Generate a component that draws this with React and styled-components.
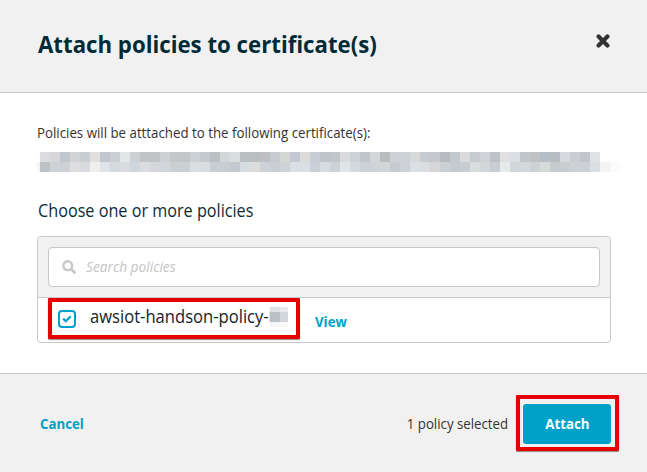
import React from "react";
import styled, { createGlobalStyle } from "styled-components";

const Global = createGlobalStyle`
  * { box-sizing: border-box; }
  body { margin: 0; background: #fff; font-family: "Open Sans", "Noto Sans", sans-serif; color: #333; }
  button, input { font-family: inherit; }
`;

const Dialog = styled.main`
  width: 647px;
  height: 472px;
  display: flex;
  flex-direction: column;
  overflow: hidden;
`;

const Header = styled.header`
  height: 93px;
  flex: none;
  display: flex;
  justify-content: space-between;
  align-items: flex-start;
  padding: 28px 37px 0 38px;
  background: #f1f1f1;
  border-bottom: 1px solid #c8c8c8;
`;

/* Single line of text, set in a slightly condensed width */
const Line = styled.span`
  display: block;
  margin: 0;
  width: ${(p) => p.$width || "auto"};
  white-space: nowrap;
  line-height: ${(p) => p.$leading || 20}px;
  font-size: ${(p) => p.$size}px;
  font-weight: ${(p) => p.$weight || 400};
  transform: scaleX(${(p) => p.$scale || 0.946});
  transform-origin: ${(p) => p.$origin || "left"} center;
  color: ${(p) => p.$color || "#333"};
  font-style: ${(p) => (p.$italic ? "italic" : "normal")};
`;

const CloseButton = styled.button`
  width: 14px;
  height: 14px;
  margin-top: 6px;
  padding: 0;
  border: 0;
  background: none;
  svg { display: block; }
`;

const Body = styled.section`
  height: 280px;
  flex: none;
  padding: 30px 36px 0 37px;
`;

const Mosaic = styled.div`
  width: 583px;
  margin: 9px 0 0 0;
`;

const MosaicRow = styled.div`
  display: flex;
  height: ${(p) => p.$h || 10}px;
`;

const Cell = styled.i`
  flex: none;
  width: ${(p) => p.$w || 10}px;
  background: ${(p) => p.$c};
`;

const Heading = styled.div`
  margin: 26px 0 0 1px;
  height: 24px;
`;

const Panel = styled.div`
  width: 574px;
  height: 107px;
  margin-top: 14px;
  border: 1px solid #c8c8c8;
  border-radius: 4px;
  overflow: hidden;
`;

const SearchArea = styled.div`
  height: 61px;
  padding: 10px;
  background: #f1f1f1;
  border-bottom: 1px solid #c8c8c8;
`;

const SearchBox = styled.div`
  height: 40px;
  display: flex;
  align-items: center;
  gap: 10px;
  padding-left: 13px;
  background: #fff;
  border: 1px solid #c8c8c8;
  border-radius: 4px;
`;

const PolicyRow = styled.div`
  height: 44px;
  display: flex;
  padding-left: 10px;
`;

const Highlight = styled.div`
  flex: none;
  display: flex;
  border: 4px solid #e60000;
  border-radius: 1px;
  box-shadow: 0 1px 1px rgba(0, 0, 0, 0.45);
  width: ${(p) => p.$w}px;
  height: ${(p) => p.$h}px;
`;

const Checkbox = styled.span`
  flex: none;
  width: 18px;
  height: 18px;
  margin: 8px 14px 0 6px;
  display: grid;
  place-items: center;
  background: #fff;
  border: 2px solid #00a1c9;
  border-radius: 4px;
`;

const Redacted = styled.span`
  flex: none;
  width: 19px;
  margin-top: 5px;
`;

const ViewLink = styled.div`
  margin: 14px 0 0 15px;
`;

const Footer = styled.footer`
  height: 99px;
  flex: none;
  display: flex;
  align-items: flex-start;
  padding: 21px 28px 0 40px;
  background: #f1f1f1;
  border-top: 1px solid #c8c8c8;
`;

const CancelLink = styled.div`
  margin-top: 19px;
  flex: 1;
`;

const Status = styled.div`
  margin: 19px 8px 0 0;
`;

const PrimaryButton = styled.button`
  width: 88px;
  height: 40px;
  margin: 5px 0 0 3px;
  padding: 0;
  display: grid;
  place-items: center;
  border: 0;
  border-radius: 3px;
  background: #00a1c9;
`;

const topCells = "dcdcde d5d7d9 c0c7cf d1d3d6 c8ced2 e0e0df c0c7ce c9cfd3 e4e5e8 ccd1d4 c0c4c6 c0c4c7 cfd0d4 c3c7ca c2c6c9 cccfd4 c3c9ce bbc0c4 d2d7da d9dddd babec1 b9bec1 bfc0c4 c8cad0 d5d7d5 c4c8d5 dcdddb c9cdd6 c0c3c7 c0c6ca d9dbde ccd2d6 c0c6ca d3d7da b9bdc0 ced2d6 ccd2d5 d7d8da c5cbd0 c5c8cc b7bbbf c3c9cf dbdbdd c5ccd0 d0d3d7 bec2c7 dfe0df d9dfe4 c2c6ca bfc3c6 b5bdc6 b8bdc1 d6dade c9cdd1 c2c6cb e0e1e4".split(" ");
const bottomCells = "bec2c5 cfd3d8 cdd1d4 dddde0 d8dade efefed e0e4e8 d4d9db dadbdf d0d6dd dbdcdf d5d7db d2d5da cbd0d2 cbd0d3 dadee0 d9dde0 cacdd3 c8cdd1 c5c8ce d5dce0 dcdcdc cdd2d6 cacfd3 cfd2d6 dae0e5 d9dfe3 cad0d8 d7dbe0 ced3d8 e0e5e8 d4d9dd cdd1d5 cfd3d7 d3d6d9 c8cbd2 ced2d6 dbe0e5 dadee1 d6d6d9 cbd0d2 c4cace c9cdd1 dadddd d3d7da c8ced1 e5eaeb d2d6d9 d3d8db cdd1d4 d6dadb c8cbce c9cdd0 ced1d4 ccd0d4 dbdfe2 f4f4f5 fafbfd".split(" ");

export default function App() {
  return (
    <>
      <Global />
      <Dialog>
        <Header>
          <Line as="h1" $size={24} $leading={32} $weight={700} $scale={0.926} $color="#002b36">
            Attach policies to certificate(s)
          </Line>
          <CloseButton aria-label="Close">
            <svg width="14" height="14" viewBox="0 0 14 14">
              <path d="M2.6 2.6l8.8 8.8M11.4 2.6l-8.8 8.8" stroke="#333" strokeWidth="4.2" strokeLinecap="round" />
            </svg>
          </CloseButton>
        </Header>
        <Body>
          <Line $size={14} $scale={0.949}>Policies will be atttached to the following certificate(s):</Line>
          <Mosaic>
            <MosaicRow>
              <Cell $w={3} $c="#fdfdfb" />
              {topCells.map((c, i) => <Cell key={i} $c={"#" + c} />)}
            </MosaicRow>
            <MosaicRow>
              <Cell $w={3} $c="#f5f5f5" />
              {bottomCells.map((c, i) => <Cell key={i} $c={"#" + c} />)}
            </MosaicRow>
          </Mosaic>
          <Heading>
            <Line $size={18} $leading={24} $scale={0.9} $color="#0d2b36">Choose one or more policies</Line>
          </Heading>
          <Panel>
            <SearchArea>
              <SearchBox>
                <svg width="14" height="14" viewBox="0 0 14 14" fill="none" stroke="#c8c8c8">
                  <circle cx="5.7" cy="5.7" r="4.4" strokeWidth="2.4" />
                  <path d="M9.3 9.3l3.2 3.2" strokeWidth="2.8" strokeLinecap="round" />
                </svg>
                <Line $size={14} $italic $scale={0.98} $color="#c4c4c4">Search policies</Line>
              </SearchBox>
            </SearchArea>
            <PolicyRow>
              <Highlight $w={252} $h={41}>
                <Checkbox>
                  <svg width="10" height="8" viewBox="0 0 10 8" fill="none">
                    <path d="M1.2 3.6l2.6 2.6 4.8-4.8" stroke="#00a1c9" strokeWidth="2.2" />
                  </svg>
                </Checkbox>
                <Line $size={18} $leading={29} $scale={0.922} $width="179px" $color="#16232b">awsiot-handson-policy-</Line>
                <Redacted>
                  <MosaicRow $h={5}><Cell $w={1} $c="#f3f4f5" /><Cell $c="#dfe2e5" /><Cell $w={8} $c="#e8e9ed" /></MosaicRow>
                  <MosaicRow $h={10}><Cell $w={1} $c="#e4e6e8" /><Cell $c="#b9c0c6" /><Cell $w={8} $c="#d3d6da" /></MosaicRow>
                  <MosaicRow $h={5}><Cell $w={1} $c="#fcfcfc" /><Cell $c="#f5f6f7" /><Cell $w={8} $c="#f8f8f9" /></MosaicRow>
                </Redacted>
              </Highlight>
              <ViewLink><Line $size={14} $weight={700} $color="#00a1c9">View</Line></ViewLink>
            </PolicyRow>
          </Panel>
        </Body>
        <Footer>
          <CancelLink><Line $size={14} $weight={700} $color="#00a1c9">Cancel</Line></CancelLink>
          <Status><Line $size={14} $origin="right">1 policy selected</Line></Status>
          <Highlight $w={103} $h={56}>
            <PrimaryButton><Line $size={14} $weight={700} $origin="center" $color="#fff">Attach</Line></PrimaryButton>
          </Highlight>
        </Footer>
      </Dialog>
    </>
  );
}
